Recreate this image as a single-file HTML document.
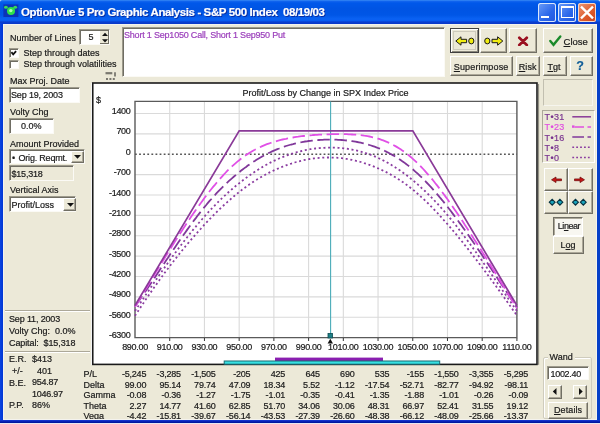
<!DOCTYPE html>
<html><head><meta charset="utf-8"><style>
html,body{margin:0;padding:0;width:600px;height:424px;overflow:hidden;background:#1648d0}
.a{position:absolute}
.t{position:absolute;font-family:"Liberation Sans",sans-serif;white-space:pre;line-height:1;-webkit-text-stroke:0.2px currentColor}
#win{position:absolute;left:0;top:0;width:600px;height:424px;overflow:hidden;background:#ece9d8;filter:blur(0.35px)}
</style></head><body><div id="win">
<div class="a" style="left:0;top:0;width:600px;height:24px;background:linear-gradient(to bottom,#3d8ff5 0,#1265ee 1.2px,#0058ea 3px,#0054e3 9px,#0056e6 15px,#0a62f3 19px,#0a5cf0 20.5px,#0a3fd0 22px,#0a38c8 24px)"></div>
<svg class="a" style="left:0;top:0" width="22" height="22"><rect x="3.4" y="4.4" width="15" height="12.6" fill="#0b33b8"/><circle cx="11" cy="11" r="4" fill="#2ee24a"/><circle cx="10.8" cy="10.6" r="1.7" fill="#b0ffb0"/><ellipse cx="5.9" cy="7.2" rx="1.9" ry="1.5" fill="#3ad858"/><ellipse cx="15.2" cy="7.2" rx="1.9" ry="1.5" fill="#3ad858"/><path d="M0,0 H2 A2,2 0 0 0 0,2Z" fill="#dfe6f5"/></svg><svg class="a" style="left:596px;top:0" width="4" height="4"><path d="M4,0 H1.5 A2.5,2.5 0 0 1 4,2.5Z" fill="#dfe6f5"/></svg>
<div class="t" style="left:21px;top:6.8px;font-size:11.5px;font-weight:bold;color:#fff;letter-spacing:-0.4px;text-shadow:1px 1px 0 #0a2ca0">OptionVue 5 Pro Graphic Analysis - S&amp;P 500 Index&nbsp; 08/19/03</div>
<div class="a" style="left:538px;top:3px;width:18px;height:18.5px;border-radius:2.5px;background:linear-gradient(135deg,#6d9ef8,#2a66ea 60%,#2257de);box-shadow:inset 0 0 0 1px #d9e6fb"></div>
<div class="a" style="left:541px;top:15.5px;width:7.5px;height:2.6px;background:#fff"></div>
<div class="a" style="left:558px;top:3px;width:18px;height:18.5px;border-radius:2.5px;background:linear-gradient(135deg,#6d9ef8,#2a66ea 60%,#2257de);box-shadow:inset 0 0 0 1px #d9e6fb"></div>
<div class="a" style="left:560.5px;top:6px;width:13.3px;height:12.4px;border:1.7px solid #fff;border-top-width:2.5px;box-sizing:border-box"></div>
<div class="a" style="left:578px;top:3px;width:18px;height:18.5px;border-radius:2.5px;background:linear-gradient(135deg,#ec9a7a,#dd5a2a 60%,#c8441c);box-shadow:inset 0 0 0 1px #f4d8cc"></div>
<svg class="a" style="left:578px;top:3px" width="18" height="19"><path d="M3,3.6 L15,15.4 M15,3.6 L3,15.4" stroke="#fff" stroke-width="2.3"/></svg>
<div class="t" style="left:10px;top:34.48px;font-size:9px;color:#1a1a1a;">Number of Lines</div>
<div class="a" style="left:79px;top:29px;width:31px;height:16px;background:#fff;border-top:1px solid #9d9a8c;border-left:1px solid #9d9a8c;border-right:1px solid #fbfaf5;border-bottom:1px solid #fbfaf5;box-shadow:inset 1px 1px 0 #6f6d63;box-sizing:border-box"></div>
<div class="a" style="left:99.5px;top:30.5px;width:9.5px;height:13.5px;background:#ece9d8;border-right:1px solid #716f64;border-bottom:1px solid #716f64;box-sizing:border-box"></div>
<svg class="a" style="left:100px;top:31px" width="10" height="14"><path d="M2,5 L5,1.8 L8,5Z" fill="#111"/><path d="M2,8.3 L5,11.5 L8,8.3Z" fill="#111"/></svg>
<div class="t" style="left:88.5px;top:33.48px;font-size:9px;color:#1a1a1a;">5</div>
<div class="a" style="left:9px;top:48px;width:10px;height:9.5px;background:#fff;border-top:1px solid #9d9a8c;border-left:1px solid #9d9a8c;border-right:1px solid #fbfaf5;border-bottom:1px solid #fbfaf5;box-shadow:inset 1px 1px 0 #6f6d63;box-sizing:border-box"></div>
<svg class="a" style="left:10px;top:49px" width="9" height="8"><path d="M1.4,3.2 L3.2,5.3 L6.1,2.1" stroke="#111" stroke-width="1.8" fill="none"/></svg>
<div class="t" style="left:23.5px;top:49.48px;font-size:9px;color:#1a1a1a;">Step through dates</div>
<div class="a" style="left:9px;top:59.5px;width:10px;height:9.5px;background:#fff;border-top:1px solid #9d9a8c;border-left:1px solid #9d9a8c;border-right:1px solid #fbfaf5;border-bottom:1px solid #fbfaf5;box-shadow:inset 1px 1px 0 #6f6d63;box-sizing:border-box"></div>
<div class="t" style="left:23.5px;top:60.48px;font-size:9px;color:#1a1a1a;">Step through volatilities</div>
<svg class="a" style="left:0;top:0" width="130" height="90"><path d="M105.5,73.2 H112.3" stroke="#7a7870" stroke-width="2.2"/><path d="M115,72.3 V76.6" stroke="#7a7870" stroke-width="1.8"/><path d="M106,79 H108 M109.4,79 H111.4 M112.8,79 H114.8" stroke="#7a7870" stroke-width="2"/></svg>
<div class="t" style="left:10px;top:77.28px;font-size:9px;color:#1a1a1a;">Max Proj. Date</div>
<div class="a" style="left:9px;top:87px;width:71px;height:16px;background:#fff;border-top:1px solid #9d9a8c;border-left:1px solid #9d9a8c;border-right:1px solid #fbfaf5;border-bottom:1px solid #fbfaf5;box-shadow:inset 1px 1px 0 #6f6d63;box-sizing:border-box"></div>
<div class="t" style="left:11px;top:90.78px;font-size:9px;color:#1a1a1a;letter-spacing:-0.15px">Sep 19, 2003</div>
<div class="t" style="left:10px;top:108.48px;font-size:9px;color:#1a1a1a;">Volty Chg</div>
<div class="a" style="left:9px;top:118px;width:45px;height:16px;background:#fff;border-top:1px solid #9d9a8c;border-left:1px solid #9d9a8c;border-right:1px solid #fbfaf5;border-bottom:1px solid #fbfaf5;box-shadow:inset 1px 1px 0 #6f6d63;box-sizing:border-box"></div>
<div class="t" style="left:21px;top:121.98px;font-size:9px;color:#1a1a1a;">0.0%</div>
<div class="t" style="left:10px;top:139.98px;font-size:9px;color:#1a1a1a;">Amount Provided</div>
<div class="a" style="left:9px;top:149px;width:76px;height:15px;background:#fff;border-top:1px solid #9d9a8c;border-left:1px solid #9d9a8c;border-right:1px solid #fbfaf5;border-bottom:1px solid #fbfaf5;box-shadow:inset 1px 1px 0 #6f6d63;box-sizing:border-box"></div>
<div class="t" style="left:12px;top:153.78px;font-size:9px;color:#1a1a1a;">•</div>
<div class="t" style="left:18.5px;top:153.78px;font-size:9px;color:#1a1a1a;letter-spacing:-0.2px">Orig. Reqmt.</div>
<div class="a" style="left:70.5px;top:150.5px;width:13.5px;height:12px;background:#ece9d8;border-top:1px solid #fff;border-left:1px solid #fff;border-right:1px solid #716f64;border-bottom:1px solid #716f64;box-shadow:inset -1px -1px 0 #aca899;box-sizing:border-box"></div>
<svg class="a" style="left:73px;top:154px" width="9" height="6"><path d="M1,1 H8 L4.5,4.8Z" fill="#111"/></svg>
<div class="a" style="left:9px;top:165px;width:65px;height:16px;background:#ece9d8;border-top:1px solid #9d9a8c;border-left:1px solid #9d9a8c;border-right:1px solid #fbfaf5;border-bottom:1px solid #fbfaf5;box-shadow:inset 1px 1px 0 #6f6d63;box-sizing:border-box"></div>
<div class="t" style="left:11.5px;top:169.98px;font-size:9px;color:#1a1a1a;letter-spacing:-0.2px">$15,318</div>
<div class="t" style="left:10px;top:186.48px;font-size:9px;color:#1a1a1a;">Vertical Axis</div>
<div class="a" style="left:9px;top:196px;width:67px;height:16px;background:#fff;border-top:1px solid #9d9a8c;border-left:1px solid #9d9a8c;border-right:1px solid #fbfaf5;border-bottom:1px solid #fbfaf5;box-shadow:inset 1px 1px 0 #6f6d63;box-sizing:border-box"></div>
<div class="t" style="left:11.5px;top:201.48px;font-size:9px;color:#1a1a1a;">Profit/Loss</div>
<div class="a" style="left:63px;top:197.5px;width:12.5px;height:13px;background:#ece9d8;border-top:1px solid #fff;border-left:1px solid #fff;border-right:1px solid #716f64;border-bottom:1px solid #716f64;box-shadow:inset -1px -1px 0 #aca899;box-sizing:border-box"></div>
<svg class="a" style="left:65.5px;top:202px" width="9" height="6"><path d="M1,1 H8 L4.5,4.8Z" fill="#111"/></svg>
<div class="a" style="left:5px;top:310px;width:85px;height:2px;border-top:1px solid #aca899;border-bottom:1px solid #fff;box-sizing:border-box"></div>
<div class="t" style="left:9px;top:314.98px;font-size:9px;color:#1a1a1a;letter-spacing:-0.15px">Sep 11, 2003</div>
<div class="t" style="left:9px;top:326.88px;font-size:9px;color:#1a1a1a;">Volty Chg:&nbsp; 0.0%</div>
<div class="t" style="left:9px;top:338.98px;font-size:9px;color:#1a1a1a;letter-spacing:-0.1px">Capital:&nbsp; $15,318</div>
<div class="a" style="left:5px;top:350.5px;width:85px;height:2px;border-top:1px solid #aca899;border-bottom:1px solid #fff;box-sizing:border-box"></div>
<div class="t" style="left:9px;top:355.28px;font-size:9px;color:#1a1a1a;">E.R.</div>
<div class="t" style="left:32px;top:355.28px;font-size:9px;color:#1a1a1a;">$413</div>
<div class="t" style="left:12px;top:367.28px;font-size:9px;color:#1a1a1a;">+/-</div>
<div class="t" style="left:37px;top:367.28px;font-size:9px;color:#1a1a1a;">401</div>
<div class="t" style="left:9px;top:378.58px;font-size:9px;color:#1a1a1a;">B.E.</div>
<div class="t" style="left:32px;top:378.38px;font-size:9px;color:#1a1a1a;letter-spacing:-0.25px">954.87</div>
<div class="t" style="left:32px;top:389.78px;font-size:9px;color:#1a1a1a;letter-spacing:-0.25px">1046.97</div>
<div class="t" style="left:9px;top:401.48px;font-size:9px;color:#1a1a1a;">P.P.</div>
<div class="t" style="left:32px;top:401.48px;font-size:9px;color:#1a1a1a;">86%</div>
<div class="a" style="left:121.5px;top:27px;width:323.5px;height:50px;background:#fff;border-top:1px solid #9d9a8c;border-left:1px solid #9d9a8c;border-right:1px solid #fbfaf5;border-bottom:1px solid #fbfaf5;box-shadow:inset 1px 1px 0 #6f6d63;box-sizing:border-box"></div>
<div class="t" style="left:124px;top:31.28px;font-size:9px;color:#9c40bc;letter-spacing:-0.2px">Short 1 Sep1050 Call, Short 1 Sep950 Put</div>
<div class="a" style="left:91px;top:82.5px;width:447px;height:282px;background:#fff"></div>
<svg class="a" style="left:0;top:0" width="600" height="424"><rect x="92.75" y="83.0" width="444.25" height="281.4" fill="none" stroke="#1a1a1a" stroke-width="1.6"/><path d="M538.6,84 V364.8" stroke="#8a887c" stroke-width="1"/></svg>
<div class="t" style="left:96px;top:96.28px;font-size:9px;color:#1a1a1a;">$</div>
<div class="t" style="left:242.5px;top:88.78px;font-size:9px;color:#1a1a1a;">Profit/Loss by Change in SPX Index Price</div>
<svg class="a" style="left:0;top:0" width="600" height="424"><path d="M169.72,101.4 V337.6 M204.44,101.4 V337.6 M239.16,101.4 V337.6 M273.88,101.4 V337.6 M308.6,101.4 V337.6 M343.32,101.4 V337.6 M378.04,101.4 V337.6 M412.76,101.4 V337.6 M447.48,101.4 V337.6 M482.2,101.4 V337.6 M135.0,113.5 H516.9 M135.0,133.87 H516.9 M135.0,174.61 H516.9 M135.0,194.98 H516.9 M135.0,215.35 H516.9 M135.0,235.72 H516.9 M135.0,256.09 H516.9 M135.0,276.46 H516.9 M135.0,296.83 H516.9 M135.0,317.2 H516.9" stroke="#dadada" stroke-width="1.1" fill="none"/><path d="M135.0,154.24 H516.9" stroke="#555" stroke-width="1.3" stroke-dasharray="1.8 2.3" fill="none"/><path d="M135,101.4 H516.9 V337.6 H135 Z" stroke="#5a5a5a" stroke-width="1.4" fill="none"/><path d="M169.72,338 V341 M204.44,338 V341 M239.16,338 V341 M273.88,338 V341 M308.6,338 V341 M343.32,338 V341 M378.04,338 V341 M412.76,338 V341 M447.48,338 V341 M482.2,338 V341 M516.92,338 V341" stroke="#333" stroke-width="1" fill="none"/><path d="M330.6,101.5 V338" stroke="#4aacb8" stroke-width="1.1" fill="none"/><rect x="328" y="333.5" width="4.5" height="4.5" fill="#1d7f86" stroke="#0c4b52" stroke-width="0.8"/><path d="M327.6,343.5 L330.3,338.8 L333,343.5Z" fill="#111"/><path d="M135.0,315.8 L136.7,313.1 L138.5,310.5 L140.2,307.9 L141.9,305.2 L143.7,302.7 L145.4,300.1 L147.2,297.5 L148.9,295.0 L150.6,292.5 L152.4,290.0 L154.1,287.5 L155.8,285.1 L157.6,282.7 L159.3,280.2 L161.0,277.9 L162.8,275.5 L164.5,273.1 L166.2,270.8 L168.0,268.5 L169.7,266.2 L171.5,263.9 L173.2,261.7 L174.9,259.5 L176.7,257.2 L178.4,255.1 L180.1,252.9 L181.9,250.7 L183.6,248.6 L185.3,246.5 L187.1,244.4 L188.8,242.4 L190.6,240.3 L192.3,238.3 L194.0,236.3 L195.8,234.3 L197.5,232.3 L199.2,230.4 L201.0,228.5 L202.7,226.6 L204.4,224.7 L206.2,222.8 L207.9,221.0 L209.6,219.2 L211.4,217.4 L213.1,215.6 L214.9,213.9 L216.6,212.1 L218.3,210.4 L220.1,208.7 L221.8,207.1 L223.5,205.5 L225.3,203.8 L227.0,202.3 L228.7,200.7 L230.5,199.2 L232.2,197.7 L234.0,196.2 L235.7,194.8 L237.4,193.4 L239.2,192.0 L240.9,190.6 L242.6,189.3 L244.4,188.0 L246.1,186.8 L247.8,185.5 L249.6,184.3 L251.3,183.2 L253.0,182.0 L254.8,180.9 L256.5,179.8 L258.3,178.8 L260.0,177.7 L261.7,176.7 L263.5,175.7 L265.2,174.8 L266.9,173.8 L268.7,172.9 L270.4,172.1 L272.1,171.2 L273.9,170.4 L275.6,169.6 L277.4,168.8 L279.1,168.1 L280.8,167.4 L282.6,166.7 L284.3,166.0 L286.0,165.3 L287.8,164.7 L289.5,164.1 L291.2,163.6 L293.0,163.0 L294.7,162.5 L296.4,162.0 L298.2,161.5 L299.9,161.1 L301.7,160.7 L303.4,160.3 L305.1,159.9 L306.9,159.6 L308.6,159.2 L310.3,159.0 L312.1,158.7 L313.8,158.4 L315.5,158.2 L317.3,158.1 L319.0,157.9 L320.8,157.8 L322.5,157.6 L324.2,157.6 L326.0,157.5 L327.7,157.5 L329.4,157.5 L331.2,157.5 L332.9,157.6 L334.6,157.6 L336.4,157.7 L338.1,157.9 L339.8,158.0 L341.6,158.2 L343.3,158.4 L345.1,158.7 L346.8,158.9 L348.5,159.2 L350.3,159.5 L352.0,159.9 L353.7,160.3 L355.5,160.7 L357.2,161.1 L358.9,161.5 L360.7,162.0 L362.4,162.5 L364.2,163.1 L365.9,163.6 L367.6,164.2 L369.4,164.8 L371.1,165.5 L372.8,166.1 L374.6,166.8 L376.3,167.6 L378.0,168.3 L379.8,169.1 L381.5,169.9 L383.2,170.7 L385.0,171.6 L386.7,172.4 L388.5,173.4 L390.2,174.3 L391.9,175.3 L393.7,176.3 L395.4,177.3 L397.1,178.4 L398.9,179.5 L400.6,180.6 L402.3,181.8 L404.1,183.0 L405.8,184.3 L407.6,185.5 L409.3,186.9 L411.0,188.2 L412.8,189.6 L414.5,191.0 L416.2,192.5 L418.0,194.0 L419.7,195.5 L421.4,197.1 L423.2,198.7 L424.9,200.3 L426.6,202.0 L428.4,203.7 L430.1,205.4 L431.9,207.2 L433.6,209.0 L435.3,210.8 L437.1,212.6 L438.8,214.5 L440.5,216.4 L442.3,218.3 L444.0,220.3 L445.7,222.2 L447.5,224.2 L449.2,226.2 L451.0,228.2 L452.7,230.3 L454.4,232.3 L456.2,234.4 L457.9,236.5 L459.6,238.6 L461.4,240.7 L463.1,242.9 L464.8,245.1 L466.6,247.2 L468.3,249.4 L470.0,251.6 L471.8,253.9 L473.5,256.1 L475.3,258.4 L477.0,260.6 L478.7,262.9 L480.5,265.2 L482.2,267.5 L483.9,269.8 L485.7,272.1 L487.4,274.5 L489.1,276.8 L490.9,279.2 L492.6,281.6 L494.4,283.9 L496.1,286.3 L497.8,288.7 L499.6,291.1 L501.3,293.5 L503.0,295.9 L504.8,298.4 L506.5,300.8 L508.2,303.2 L510.0,305.7 L511.7,308.1 L513.4,310.6 L515.2,313.0 L516.9,315.5" stroke="#8a3ca0" stroke-width="1.8" stroke-dasharray="2 2.7" fill="none"/><path d="M135.0,311.0 L136.7,308.4 L138.5,305.8 L140.2,303.2 L141.9,300.6 L143.7,298.0 L145.4,295.4 L147.2,292.8 L148.9,290.3 L150.6,287.7 L152.4,285.2 L154.1,282.6 L155.8,280.1 L157.6,277.6 L159.3,275.1 L161.0,272.6 L162.8,270.1 L164.5,267.7 L166.2,265.2 L168.0,262.8 L169.7,260.4 L171.5,258.0 L173.2,255.6 L174.9,253.3 L176.7,250.9 L178.4,248.6 L180.1,246.3 L181.9,244.0 L183.6,241.8 L185.3,239.5 L187.1,237.3 L188.8,235.1 L190.6,232.9 L192.3,230.8 L194.0,228.7 L195.8,226.6 L197.5,224.5 L199.2,222.5 L201.0,220.5 L202.7,218.5 L204.4,216.5 L206.2,214.6 L207.9,212.7 L209.6,210.8 L211.4,208.9 L213.1,207.1 L214.9,205.3 L216.6,203.6 L218.3,201.8 L220.1,200.1 L221.8,198.4 L223.5,196.8 L225.3,195.2 L227.0,193.6 L228.7,192.0 L230.5,190.5 L232.2,189.0 L234.0,187.5 L235.7,186.0 L237.4,184.6 L239.2,183.2 L240.9,181.8 L242.6,180.5 L244.4,179.2 L246.1,177.9 L247.8,176.6 L249.6,175.4 L251.3,174.1 L253.0,173.0 L254.8,171.8 L256.5,170.7 L258.3,169.6 L260.0,168.5 L261.7,167.4 L263.5,166.4 L265.2,165.4 L266.9,164.5 L268.7,163.5 L270.4,162.6 L272.1,161.8 L273.9,160.9 L275.6,160.1 L277.4,159.3 L279.1,158.5 L280.8,157.8 L282.6,157.1 L284.3,156.4 L286.0,155.7 L287.8,155.1 L289.5,154.5 L291.2,153.9 L293.0,153.4 L294.7,152.8 L296.4,152.3 L298.2,151.8 L299.9,151.4 L301.7,151.0 L303.4,150.6 L305.1,150.2 L306.9,149.9 L308.6,149.5 L310.3,149.2 L312.1,149.0 L313.8,148.7 L315.5,148.5 L317.3,148.3 L319.0,148.1 L320.8,148.0 L322.5,147.9 L324.2,147.8 L326.0,147.7 L327.7,147.6 L329.4,147.6 L331.2,147.6 L332.9,147.6 L334.6,147.7 L336.4,147.7 L338.1,147.8 L339.8,148.0 L341.6,148.1 L343.3,148.3 L345.1,148.5 L346.8,148.7 L348.5,149.0 L350.3,149.3 L352.0,149.6 L353.7,149.9 L355.5,150.3 L357.2,150.7 L358.9,151.1 L360.7,151.6 L362.4,152.1 L364.2,152.6 L365.9,153.2 L367.6,153.7 L369.4,154.4 L371.1,155.0 L372.8,155.7 L374.6,156.4 L376.3,157.1 L378.0,157.9 L379.8,158.7 L381.5,159.5 L383.2,160.4 L385.0,161.3 L386.7,162.3 L388.5,163.2 L390.2,164.2 L391.9,165.3 L393.7,166.3 L395.4,167.4 L397.1,168.6 L398.9,169.7 L400.6,170.9 L402.3,172.2 L404.1,173.4 L405.8,174.7 L407.6,176.0 L409.3,177.4 L411.0,178.8 L412.8,180.2 L414.5,181.6 L416.2,183.1 L418.0,184.6 L419.7,186.2 L421.4,187.8 L423.2,189.4 L424.9,191.0 L426.6,192.7 L428.4,194.4 L430.1,196.1 L431.9,197.9 L433.6,199.6 L435.3,201.5 L437.1,203.3 L438.8,205.2 L440.5,207.1 L442.3,209.1 L444.0,211.0 L445.7,213.1 L447.5,215.1 L449.2,217.2 L451.0,219.3 L452.7,221.4 L454.4,223.6 L456.2,225.7 L457.9,228.0 L459.6,230.2 L461.4,232.4 L463.1,234.7 L464.8,237.0 L466.6,239.3 L468.3,241.7 L470.0,244.0 L471.8,246.4 L473.5,248.8 L475.3,251.2 L477.0,253.7 L478.7,256.1 L480.5,258.5 L482.2,261.0 L483.9,263.5 L485.7,266.0 L487.4,268.4 L489.1,270.9 L490.9,273.4 L492.6,275.9 L494.4,278.4 L496.1,281.0 L497.8,283.5 L499.6,286.0 L501.3,288.5 L503.0,291.0 L504.8,293.5 L506.5,296.0 L508.2,298.6 L510.0,301.1 L511.7,303.6 L513.4,306.0 L515.2,308.5 L516.9,311.0" stroke="#8a3ca0" stroke-width="1.8" stroke-dasharray="2 2.7" fill="none"/><path d="M135.0,306.4 L136.7,303.9 L138.5,301.5 L140.2,299.0 L141.9,296.5 L143.7,293.9 L145.4,291.4 L147.2,288.8 L148.9,286.3 L150.6,283.7 L152.4,281.1 L154.1,278.5 L155.8,275.9 L157.6,273.3 L159.3,270.7 L161.0,268.1 L162.8,265.5 L164.5,262.9 L166.2,260.3 L168.0,257.7 L169.7,255.1 L171.5,252.5 L173.2,249.9 L174.9,247.4 L176.7,244.8 L178.4,242.3 L180.1,239.8 L181.9,237.3 L183.6,234.8 L185.3,232.4 L187.1,229.9 L188.8,227.5 L190.6,225.1 L192.3,222.8 L194.0,220.4 L195.8,218.1 L197.5,215.8 L199.2,213.6 L201.0,211.4 L202.7,209.2 L204.4,207.1 L206.2,205.0 L207.9,202.9 L209.6,200.9 L211.4,199.0 L213.1,197.0 L214.9,195.1 L216.6,193.2 L218.3,191.4 L220.1,189.6 L221.8,187.9 L223.5,186.1 L225.3,184.5 L227.0,182.8 L228.7,181.2 L230.5,179.6 L232.2,178.1 L234.0,176.5 L235.7,175.1 L237.4,173.6 L239.2,172.2 L240.9,170.8 L242.6,169.5 L244.4,168.1 L246.1,166.9 L247.8,165.6 L249.6,164.4 L251.3,163.2 L253.0,162.0 L254.8,160.9 L256.5,159.8 L258.3,158.7 L260.0,157.7 L261.7,156.7 L263.5,155.7 L265.2,154.8 L266.9,153.9 L268.7,153.0 L270.4,152.2 L272.1,151.4 L273.9,150.6 L275.6,149.9 L277.4,149.1 L279.1,148.5 L280.8,147.8 L282.6,147.2 L284.3,146.6 L286.0,146.0 L287.8,145.5 L289.5,145.0 L291.2,144.5 L293.0,144.1 L294.7,143.6 L296.4,143.2 L298.2,142.8 L299.9,142.5 L301.7,142.2 L303.4,141.8 L305.1,141.5 L306.9,141.3 L308.6,141.0 L310.3,140.8 L312.1,140.6 L313.8,140.4 L315.5,140.2 L317.3,140.1 L319.0,140.0 L320.8,139.9 L322.5,139.8 L324.2,139.7 L326.0,139.7 L327.7,139.6 L329.4,139.6 L331.2,139.6 L332.9,139.6 L334.6,139.7 L336.4,139.7 L338.1,139.8 L339.8,139.9 L341.6,140.0 L343.3,140.1 L345.1,140.3 L346.8,140.5 L348.5,140.7 L350.3,140.9 L352.0,141.1 L353.7,141.4 L355.5,141.7 L357.2,142.0 L358.9,142.3 L360.7,142.7 L362.4,143.1 L364.2,143.5 L365.9,144.0 L367.6,144.5 L369.4,145.0 L371.1,145.5 L372.8,146.1 L374.6,146.7 L376.3,147.3 L378.0,148.0 L379.8,148.7 L381.5,149.4 L383.2,150.2 L385.0,151.0 L386.7,151.9 L388.5,152.7 L390.2,153.7 L391.9,154.6 L393.7,155.6 L395.4,156.7 L397.1,157.7 L398.9,158.8 L400.6,160.0 L402.3,161.2 L404.1,162.4 L405.8,163.7 L407.6,165.1 L409.3,166.4 L411.0,167.8 L412.8,169.3 L414.5,170.8 L416.2,172.3 L418.0,173.9 L419.7,175.6 L421.4,177.2 L423.2,179.0 L424.9,180.7 L426.6,182.5 L428.4,184.3 L430.1,186.2 L431.9,188.1 L433.6,190.1 L435.3,192.0 L437.1,194.1 L438.8,196.1 L440.5,198.2 L442.3,200.3 L444.0,202.4 L445.7,204.6 L447.5,206.8 L449.2,209.0 L451.0,211.3 L452.7,213.6 L454.4,215.9 L456.2,218.2 L457.9,220.5 L459.6,222.9 L461.4,225.3 L463.1,227.7 L464.8,230.1 L466.6,232.6 L468.3,235.1 L470.0,237.5 L471.8,240.0 L473.5,242.6 L475.3,245.1 L477.0,247.6 L478.7,250.2 L480.5,252.7 L482.2,255.3 L483.9,257.9 L485.7,260.5 L487.4,263.1 L489.1,265.7 L490.9,268.3 L492.6,270.9 L494.4,273.5 L496.1,276.1 L497.8,278.7 L499.6,281.4 L501.3,284.0 L503.0,286.6 L504.8,289.2 L506.5,291.8 L508.2,294.5 L510.0,297.1 L511.7,299.7 L513.4,302.3 L515.2,304.9 L516.9,307.5" stroke="#80389a" stroke-width="1.8" stroke-dasharray="12.5 4.6" fill="none"/><path d="M135.0,306.9 L136.7,304.0 L138.5,301.1 L140.2,298.2 L141.9,295.3 L143.7,292.4 L145.4,289.5 L147.2,286.7 L148.9,283.8 L150.6,280.9 L152.4,278.1 L154.1,275.2 L155.8,272.4 L157.6,269.5 L159.3,266.7 L161.0,263.8 L162.8,261.0 L164.5,258.2 L166.2,255.4 L168.0,252.6 L169.7,249.8 L171.5,247.1 L173.2,244.3 L174.9,241.6 L176.7,238.8 L178.4,236.1 L180.1,233.4 L181.9,230.7 L183.6,228.1 L185.3,225.4 L187.1,222.8 L188.8,220.2 L190.6,217.6 L192.3,215.1 L194.0,212.6 L195.8,210.1 L197.5,207.6 L199.2,205.2 L201.0,202.8 L202.7,200.4 L204.4,198.0 L206.2,195.7 L207.9,193.5 L209.6,191.2 L211.4,189.0 L213.1,186.9 L214.9,184.8 L216.6,182.7 L218.3,180.7 L220.1,178.7 L221.8,176.8 L223.5,174.9 L225.3,173.0 L227.0,171.2 L228.7,169.5 L230.5,167.8 L232.2,166.2 L234.0,164.6 L235.7,163.1 L237.4,161.6 L239.2,160.2 L240.9,158.8 L242.6,157.5 L244.4,156.3 L246.1,155.1 L247.8,153.9 L249.6,152.8 L251.3,151.8 L253.0,150.7 L254.8,149.8 L256.5,148.9 L258.3,148.0 L260.0,147.2 L261.7,146.4 L263.5,145.6 L265.2,144.9 L266.9,144.2 L268.7,143.6 L270.4,143.0 L272.1,142.4 L273.9,141.9 L275.6,141.4 L277.4,140.9 L279.1,140.4 L280.8,139.9 L282.6,139.5 L284.3,139.1 L286.0,138.8 L287.8,138.4 L289.5,138.1 L291.2,137.8 L293.0,137.5 L294.7,137.2 L296.4,136.9 L298.2,136.7 L299.9,136.4 L301.7,136.2 L303.4,136.0 L305.1,135.8 L306.9,135.6 L308.6,135.5 L310.3,135.3 L312.1,135.2 L313.8,135.0 L315.5,134.9 L317.3,134.8 L319.0,134.7 L320.8,134.6 L322.5,134.5 L324.2,134.4 L326.0,134.4 L327.7,134.3 L329.4,134.3 L331.2,134.2 L332.9,134.2 L334.6,134.2 L336.4,134.1 L338.1,134.1 L339.8,134.1 L341.6,134.1 L343.3,134.2 L345.1,134.2 L346.8,134.2 L348.5,134.3 L350.3,134.4 L352.0,134.5 L353.7,134.6 L355.5,134.7 L357.2,134.8 L358.9,135.0 L360.7,135.2 L362.4,135.4 L364.2,135.7 L365.9,135.9 L367.6,136.2 L369.4,136.5 L371.1,136.9 L372.8,137.3 L374.6,137.7 L376.3,138.2 L378.0,138.7 L379.8,139.2 L381.5,139.8 L383.2,140.4 L385.0,141.1 L386.7,141.8 L388.5,142.6 L390.2,143.4 L391.9,144.3 L393.7,145.2 L395.4,146.1 L397.1,147.1 L398.9,148.2 L400.6,149.3 L402.3,150.5 L404.1,151.7 L405.8,153.0 L407.6,154.4 L409.3,155.8 L411.0,157.2 L412.8,158.8 L414.5,160.3 L416.2,161.9 L418.0,163.6 L419.7,165.3 L421.4,167.1 L423.2,169.0 L424.9,170.9 L426.6,172.8 L428.4,174.8 L430.1,176.8 L431.9,178.9 L433.6,181.0 L435.3,183.2 L437.1,185.4 L438.8,187.6 L440.5,189.9 L442.3,192.2 L444.0,194.6 L445.7,196.9 L447.5,199.3 L449.2,201.8 L451.0,204.2 L452.7,206.7 L454.4,209.3 L456.2,211.8 L457.9,214.3 L459.6,216.9 L461.4,219.5 L463.1,222.1 L464.8,224.8 L466.6,227.4 L468.3,230.1 L470.0,232.8 L471.8,235.5 L473.5,238.2 L475.3,240.9 L477.0,243.6 L478.7,246.4 L480.5,249.1 L482.2,251.9 L483.9,254.6 L485.7,257.4 L487.4,260.2 L489.1,263.0 L490.9,265.8 L492.6,268.6 L494.4,271.4 L496.1,274.2 L497.8,277.0 L499.6,279.8 L501.3,282.7 L503.0,285.5 L504.8,288.3 L506.5,291.2 L508.2,294.0 L510.0,296.9 L511.7,299.7 L513.4,302.6 L515.2,305.5 L516.9,308.3" stroke="#e050e6" stroke-width="1.8" stroke-dasharray="12.5 4.6" fill="none"/><path d="M135.0,305.5 L239.2,130.9 L412.8,130.9 L516.9,305.5" stroke="#8a3a98" stroke-width="1.7" fill="none"/><rect x="275" y="357.6" width="108" height="3.4" fill="#8a1fb0"/><rect x="224.2" y="361" width="215.5" height="3.2" fill="#36e0e2" stroke="#1a6a72" stroke-width="1"/></svg>
<div class="t" style="right:469.5px;top:107.08px;font-size:9px;color:#1a1a1a;text-align:right;letter-spacing:-0.3px">1400</div>
<div class="t" style="right:469.5px;top:127.45px;font-size:9px;color:#1a1a1a;text-align:right;letter-spacing:-0.3px">700</div>
<div class="t" style="right:469.5px;top:147.82px;font-size:9px;color:#1a1a1a;text-align:right;letter-spacing:-0.3px">0</div>
<div class="t" style="right:469.5px;top:168.19px;font-size:9px;color:#1a1a1a;text-align:right;letter-spacing:-0.3px">-700</div>
<div class="t" style="right:469.5px;top:188.56px;font-size:9px;color:#1a1a1a;text-align:right;letter-spacing:-0.3px">-1400</div>
<div class="t" style="right:469.5px;top:208.93px;font-size:9px;color:#1a1a1a;text-align:right;letter-spacing:-0.3px">-2100</div>
<div class="t" style="right:469.5px;top:229.30px;font-size:9px;color:#1a1a1a;text-align:right;letter-spacing:-0.3px">-2800</div>
<div class="t" style="right:469.5px;top:249.67px;font-size:9px;color:#1a1a1a;text-align:right;letter-spacing:-0.3px">-3500</div>
<div class="t" style="right:469.5px;top:270.04px;font-size:9px;color:#1a1a1a;text-align:right;letter-spacing:-0.3px">-4200</div>
<div class="t" style="right:469.5px;top:290.41px;font-size:9px;color:#1a1a1a;text-align:right;letter-spacing:-0.3px">-4900</div>
<div class="t" style="right:469.5px;top:310.78px;font-size:9px;color:#1a1a1a;text-align:right;letter-spacing:-0.3px">-5600</div>
<div class="t" style="right:469.5px;top:331.15px;font-size:9px;color:#1a1a1a;text-align:right;letter-spacing:-0.3px">-6300</div>
<div class="t" style="left:115.00px;width:40px;text-align:center;top:343.39px;font-size:9px;color:#1a1a1a;letter-spacing:-0.3px">890.00</div>
<div class="t" style="left:149.72px;width:40px;text-align:center;top:343.39px;font-size:9px;color:#1a1a1a;letter-spacing:-0.3px">910.00</div>
<div class="t" style="left:184.44px;width:40px;text-align:center;top:343.39px;font-size:9px;color:#1a1a1a;letter-spacing:-0.3px">930.00</div>
<div class="t" style="left:219.16px;width:40px;text-align:center;top:343.39px;font-size:9px;color:#1a1a1a;letter-spacing:-0.3px">950.00</div>
<div class="t" style="left:253.88px;width:40px;text-align:center;top:343.39px;font-size:9px;color:#1a1a1a;letter-spacing:-0.3px">970.00</div>
<div class="t" style="left:288.60px;width:40px;text-align:center;top:343.39px;font-size:9px;color:#1a1a1a;letter-spacing:-0.3px">990.00</div>
<div class="t" style="left:323.32px;width:40px;text-align:center;top:343.39px;font-size:9px;color:#1a1a1a;letter-spacing:-0.3px">1010.00</div>
<div class="t" style="left:358.04px;width:40px;text-align:center;top:343.39px;font-size:9px;color:#1a1a1a;letter-spacing:-0.3px">1030.00</div>
<div class="t" style="left:392.76px;width:40px;text-align:center;top:343.39px;font-size:9px;color:#1a1a1a;letter-spacing:-0.3px">1050.00</div>
<div class="t" style="left:427.48px;width:40px;text-align:center;top:343.39px;font-size:9px;color:#1a1a1a;letter-spacing:-0.3px">1070.00</div>
<div class="t" style="left:462.20px;width:40px;text-align:center;top:343.39px;font-size:9px;color:#1a1a1a;letter-spacing:-0.3px">1090.00</div>
<div class="t" style="left:496.92px;width:40px;text-align:center;top:343.39px;font-size:9px;color:#1a1a1a;letter-spacing:-0.3px">1110.00</div>
<div class="t" style="left:83.5px;top:370.18px;font-size:9px;color:#1a1a1a;">P/L</div>
<div class="t" style="right:453.8px;top:370.18px;font-size:9px;color:#1a1a1a;text-align:right;letter-spacing:-0.2px">-5,245</div>
<div class="t" style="right:419.08000000000004px;top:370.18px;font-size:9px;color:#1a1a1a;text-align:right;letter-spacing:-0.2px">-3,285</div>
<div class="t" style="right:384.36px;top:370.18px;font-size:9px;color:#1a1a1a;text-align:right;letter-spacing:-0.2px">-1,505</div>
<div class="t" style="right:349.64px;top:370.18px;font-size:9px;color:#1a1a1a;text-align:right;letter-spacing:-0.2px">-205</div>
<div class="t" style="right:314.92px;top:370.18px;font-size:9px;color:#1a1a1a;text-align:right;letter-spacing:-0.2px">425</div>
<div class="t" style="right:280.2px;top:370.18px;font-size:9px;color:#1a1a1a;text-align:right;letter-spacing:-0.2px">645</div>
<div class="t" style="right:245.48000000000002px;top:370.18px;font-size:9px;color:#1a1a1a;text-align:right;letter-spacing:-0.2px">690</div>
<div class="t" style="right:210.76000000000005px;top:370.18px;font-size:9px;color:#1a1a1a;text-align:right;letter-spacing:-0.2px">535</div>
<div class="t" style="right:176.04000000000002px;top:370.18px;font-size:9px;color:#1a1a1a;text-align:right;letter-spacing:-0.2px">-155</div>
<div class="t" style="right:141.32px;top:370.18px;font-size:9px;color:#1a1a1a;text-align:right;letter-spacing:-0.2px">-1,550</div>
<div class="t" style="right:106.60000000000002px;top:370.18px;font-size:9px;color:#1a1a1a;text-align:right;letter-spacing:-0.2px">-3,355</div>
<div class="t" style="right:71.88px;top:370.18px;font-size:9px;color:#1a1a1a;text-align:right;letter-spacing:-0.2px">-5,295</div>
<div class="t" style="left:83.5px;top:380.68px;font-size:9px;color:#1a1a1a;">Delta</div>
<div class="t" style="right:453.8px;top:380.68px;font-size:9px;color:#1a1a1a;text-align:right;letter-spacing:-0.2px">99.00</div>
<div class="t" style="right:419.08000000000004px;top:380.68px;font-size:9px;color:#1a1a1a;text-align:right;letter-spacing:-0.2px">95.14</div>
<div class="t" style="right:384.36px;top:380.68px;font-size:9px;color:#1a1a1a;text-align:right;letter-spacing:-0.2px">79.74</div>
<div class="t" style="right:349.64px;top:380.68px;font-size:9px;color:#1a1a1a;text-align:right;letter-spacing:-0.2px">47.09</div>
<div class="t" style="right:314.92px;top:380.68px;font-size:9px;color:#1a1a1a;text-align:right;letter-spacing:-0.2px">18.34</div>
<div class="t" style="right:280.2px;top:380.68px;font-size:9px;color:#1a1a1a;text-align:right;letter-spacing:-0.2px">5.52</div>
<div class="t" style="right:245.48000000000002px;top:380.68px;font-size:9px;color:#1a1a1a;text-align:right;letter-spacing:-0.2px">-1.12</div>
<div class="t" style="right:210.76000000000005px;top:380.68px;font-size:9px;color:#1a1a1a;text-align:right;letter-spacing:-0.2px">-17.54</div>
<div class="t" style="right:176.04000000000002px;top:380.68px;font-size:9px;color:#1a1a1a;text-align:right;letter-spacing:-0.2px">-52.71</div>
<div class="t" style="right:141.32px;top:380.68px;font-size:9px;color:#1a1a1a;text-align:right;letter-spacing:-0.2px">-82.77</div>
<div class="t" style="right:106.60000000000002px;top:380.68px;font-size:9px;color:#1a1a1a;text-align:right;letter-spacing:-0.2px">-94.92</div>
<div class="t" style="right:71.88px;top:380.68px;font-size:9px;color:#1a1a1a;text-align:right;letter-spacing:-0.2px">-98.11</div>
<div class="t" style="left:83.5px;top:391.28px;font-size:9px;color:#1a1a1a;">Gamma</div>
<div class="t" style="right:453.8px;top:391.28px;font-size:9px;color:#1a1a1a;text-align:right;letter-spacing:-0.2px">-0.08</div>
<div class="t" style="right:419.08000000000004px;top:391.28px;font-size:9px;color:#1a1a1a;text-align:right;letter-spacing:-0.2px">-0.36</div>
<div class="t" style="right:384.36px;top:391.28px;font-size:9px;color:#1a1a1a;text-align:right;letter-spacing:-0.2px">-1.27</div>
<div class="t" style="right:349.64px;top:391.28px;font-size:9px;color:#1a1a1a;text-align:right;letter-spacing:-0.2px">-1.75</div>
<div class="t" style="right:314.92px;top:391.28px;font-size:9px;color:#1a1a1a;text-align:right;letter-spacing:-0.2px">-1.01</div>
<div class="t" style="right:280.2px;top:391.28px;font-size:9px;color:#1a1a1a;text-align:right;letter-spacing:-0.2px">-0.35</div>
<div class="t" style="right:245.48000000000002px;top:391.28px;font-size:9px;color:#1a1a1a;text-align:right;letter-spacing:-0.2px">-0.41</div>
<div class="t" style="right:210.76000000000005px;top:391.28px;font-size:9px;color:#1a1a1a;text-align:right;letter-spacing:-0.2px">-1.35</div>
<div class="t" style="right:176.04000000000002px;top:391.28px;font-size:9px;color:#1a1a1a;text-align:right;letter-spacing:-0.2px">-1.88</div>
<div class="t" style="right:141.32px;top:391.28px;font-size:9px;color:#1a1a1a;text-align:right;letter-spacing:-0.2px">-1.01</div>
<div class="t" style="right:106.60000000000002px;top:391.28px;font-size:9px;color:#1a1a1a;text-align:right;letter-spacing:-0.2px">-0.26</div>
<div class="t" style="right:71.88px;top:391.28px;font-size:9px;color:#1a1a1a;text-align:right;letter-spacing:-0.2px">-0.09</div>
<div class="t" style="left:83.5px;top:401.88px;font-size:9px;color:#1a1a1a;">Theta</div>
<div class="t" style="right:453.8px;top:401.88px;font-size:9px;color:#1a1a1a;text-align:right;letter-spacing:-0.2px">2.27</div>
<div class="t" style="right:419.08000000000004px;top:401.88px;font-size:9px;color:#1a1a1a;text-align:right;letter-spacing:-0.2px">14.77</div>
<div class="t" style="right:384.36px;top:401.88px;font-size:9px;color:#1a1a1a;text-align:right;letter-spacing:-0.2px">41.60</div>
<div class="t" style="right:349.64px;top:401.88px;font-size:9px;color:#1a1a1a;text-align:right;letter-spacing:-0.2px">62.85</div>
<div class="t" style="right:314.92px;top:401.88px;font-size:9px;color:#1a1a1a;text-align:right;letter-spacing:-0.2px">51.70</div>
<div class="t" style="right:280.2px;top:401.88px;font-size:9px;color:#1a1a1a;text-align:right;letter-spacing:-0.2px">34.06</div>
<div class="t" style="right:245.48000000000002px;top:401.88px;font-size:9px;color:#1a1a1a;text-align:right;letter-spacing:-0.2px">30.06</div>
<div class="t" style="right:210.76000000000005px;top:401.88px;font-size:9px;color:#1a1a1a;text-align:right;letter-spacing:-0.2px">48.31</div>
<div class="t" style="right:176.04000000000002px;top:401.88px;font-size:9px;color:#1a1a1a;text-align:right;letter-spacing:-0.2px">66.97</div>
<div class="t" style="right:141.32px;top:401.88px;font-size:9px;color:#1a1a1a;text-align:right;letter-spacing:-0.2px">52.41</div>
<div class="t" style="right:106.60000000000002px;top:401.88px;font-size:9px;color:#1a1a1a;text-align:right;letter-spacing:-0.2px">31.55</div>
<div class="t" style="right:71.88px;top:401.88px;font-size:9px;color:#1a1a1a;text-align:right;letter-spacing:-0.2px">19.12</div>
<div class="t" style="left:83.5px;top:412.48px;font-size:9px;color:#1a1a1a;">Vega</div>
<div class="t" style="right:453.8px;top:412.48px;font-size:9px;color:#1a1a1a;text-align:right;letter-spacing:-0.2px">-4.42</div>
<div class="t" style="right:419.08000000000004px;top:412.48px;font-size:9px;color:#1a1a1a;text-align:right;letter-spacing:-0.2px">-15.81</div>
<div class="t" style="right:384.36px;top:412.48px;font-size:9px;color:#1a1a1a;text-align:right;letter-spacing:-0.2px">-39.67</div>
<div class="t" style="right:349.64px;top:412.48px;font-size:9px;color:#1a1a1a;text-align:right;letter-spacing:-0.2px">-56.14</div>
<div class="t" style="right:314.92px;top:412.48px;font-size:9px;color:#1a1a1a;text-align:right;letter-spacing:-0.2px">-43.53</div>
<div class="t" style="right:280.2px;top:412.48px;font-size:9px;color:#1a1a1a;text-align:right;letter-spacing:-0.2px">-27.39</div>
<div class="t" style="right:245.48000000000002px;top:412.48px;font-size:9px;color:#1a1a1a;text-align:right;letter-spacing:-0.2px">-26.60</div>
<div class="t" style="right:210.76000000000005px;top:412.48px;font-size:9px;color:#1a1a1a;text-align:right;letter-spacing:-0.2px">-48.38</div>
<div class="t" style="right:176.04000000000002px;top:412.48px;font-size:9px;color:#1a1a1a;text-align:right;letter-spacing:-0.2px">-66.12</div>
<div class="t" style="right:141.32px;top:412.48px;font-size:9px;color:#1a1a1a;text-align:right;letter-spacing:-0.2px">-48.09</div>
<div class="t" style="right:106.60000000000002px;top:412.48px;font-size:9px;color:#1a1a1a;text-align:right;letter-spacing:-0.2px">-25.66</div>
<div class="t" style="right:71.88px;top:412.48px;font-size:9px;color:#1a1a1a;text-align:right;letter-spacing:-0.2px">-13.37</div>
<div class="a" style="left:450px;top:28px;width:28.5px;height:25px;background:#ece9d8;border:1px solid #404040;box-shadow:inset 1px 1px 0 #fff,inset -1px -1px 0 #8a887c;box-sizing:border-box"></div>
<div class="a" style="left:453px;top:31px;width:22.5px;height:19px;border:1px solid #cdcabb;box-sizing:border-box"></div>
<div class="a" style="left:480px;top:28px;width:27px;height:25px;background:#ece9d8;border-top:1px solid #fff;border-left:1px solid #fff;border-right:1px solid #716f64;border-bottom:1px solid #716f64;box-shadow:inset -1px -1px 0 #aca899;box-sizing:border-box"></div>
<svg class="a" style="left:0;top:0" width="600" height="424"><path d="M455.8,41 L461,36.8 V39.3 H466.6 V42.7 H461 V45.2Z" fill="#f0ec10" stroke="#1a1a1a" stroke-width="1" stroke-linejoin="round"/><ellipse cx="471.3" cy="41" rx="2.6" ry="2.9" fill="#f0ec10" stroke="#1a1a1a" stroke-width="1"/><path d="M502.8,41 L497.6,36.8 V39.3 H492 V42.7 H497.6 V45.2Z" fill="#f0ec10" stroke="#1a1a1a" stroke-width="1" stroke-linejoin="round"/><ellipse cx="487.3" cy="41" rx="2.6" ry="2.9" fill="#f0ec10" stroke="#1a1a1a" stroke-width="1"/></svg>
<div class="a" style="left:509px;top:28px;width:28px;height:25px;background:#ece9d8;border-top:1px solid #fff;border-left:1px solid #fff;border-right:1px solid #716f64;border-bottom:1px solid #716f64;box-shadow:inset -1px -1px 0 #aca899;box-sizing:border-box"></div>
<svg class="a" style="left:517px;top:36px" width="12" height="10"><path d="M2.3,1.8 L9.8,9 M9.8,1.8 L2.3,9" stroke="#9a1020" stroke-width="2.7" stroke-linecap="round"/></svg>
<div class="a" style="left:542.5px;top:28px;width:50.5px;height:25px;background:#ece9d8;border-top:1px solid #fff;border-left:1px solid #fff;border-right:1px solid #716f64;border-bottom:1px solid #716f64;box-shadow:inset -1px -1px 0 #aca899;box-sizing:border-box"></div>
<svg class="a" style="left:548px;top:34px" width="14" height="13"><path d="M2.3,7 L5.5,10.8 L12.3,2.5" stroke="#1a8a2a" stroke-width="2.4" fill="none" stroke-linecap="round"/></svg>
<div class="t" style="left:563.5px;top:36.59px;font-size:9.5px;color:#1a1a1a;"><u>C</u>lose</div>
<div class="a" style="left:450px;top:56px;width:62.5px;height:20px;background:#ece9d8;border-top:1px solid #fff;border-left:1px solid #fff;border-right:1px solid #716f64;border-bottom:1px solid #716f64;box-shadow:inset -1px -1px 0 #aca899;box-sizing:border-box"></div>
<div class="t" style="left:453.8px;top:62.98px;font-size:9px;color:#1a1a1a;letter-spacing:0.15px"><u>S</u>uperimpose</div>
<div class="a" style="left:515.5px;top:56px;width:24px;height:20px;background:#ece9d8;border-top:1px solid #fff;border-left:1px solid #fff;border-right:1px solid #716f64;border-bottom:1px solid #716f64;box-shadow:inset -1px -1px 0 #aca899;box-sizing:border-box"></div>
<div class="t" style="left:518.7px;top:62.98px;font-size:9px;color:#1a1a1a;letter-spacing:0.1px"><u>R</u>isk</div>
<div class="a" style="left:543px;top:56px;width:24px;height:20px;background:#ece9d8;border-top:1px solid #fff;border-left:1px solid #fff;border-right:1px solid #716f64;border-bottom:1px solid #716f64;box-shadow:inset -1px -1px 0 #aca899;box-sizing:border-box"></div>
<div class="t" style="left:547.5px;top:62.98px;font-size:9px;color:#1a1a1a;"><u>T</u>gt</div>
<div class="a" style="left:569.5px;top:56px;width:23px;height:20px;background:#ece9d8;border-top:1px solid #fff;border-left:1px solid #fff;border-right:1px solid #716f64;border-bottom:1px solid #716f64;box-shadow:inset -1px -1px 0 #aca899;box-sizing:border-box"></div>
<div class="t" style="left:576.3px;top:59.5px;font-size:12.5px;font-weight:bold;color:#0d5c98">?</div>
<div class="a" style="left:543px;top:78.5px;width:50px;height:27px;background:#ece9d8;border-top:1px solid #c2bfb0;border-left:1px solid #c2bfb0;border-right:1px solid #f6f5ee;border-bottom:1px solid #f6f5ee;box-sizing:border-box"></div>
<div class="a" style="left:541.5px;top:109.5px;width:53px;height:53.5px;background:#ece9d8;border-top:1px solid #aca899;border-left:1px solid #aca899;border-right:1px solid #fff;border-bottom:1px solid #fff;box-sizing:border-box"></div>
<div class="t" style="left:544.5px;top:113.28px;font-size:9px;color:#7a3590;letter-spacing:0.4px">T•31</div>
<div class="t" style="left:544.5px;top:123.48px;font-size:9px;color:#e050e0;letter-spacing:0.4px">T•23</div>
<div class="t" style="left:544.5px;top:133.68px;font-size:9px;color:#7a3590;letter-spacing:0.4px">T•16</div>
<div class="t" style="left:544.5px;top:143.88px;font-size:9px;color:#7a3590;letter-spacing:0.4px">T•8</div>
<div class="t" style="left:544.5px;top:154.08px;font-size:9px;color:#7a3590;letter-spacing:0.4px">T•0</div>
<svg class="a" style="left:0;top:0" width="600" height="424"><path d="M572.3,116.8 H591" stroke="#8a3a98" stroke-width="1.5"/><path d="M572,126.6 H574.5" stroke="#e050e0" stroke-width="2.4"/><path d="M574.5,127 H584 M587.5,127 H591" stroke="#e050e0" stroke-width="1.4"/><path d="M572.3,137 H584 M587.5,137 H591" stroke="#80389a" stroke-width="1.5"/><path d="M572.3,147.2 H591" stroke="#8a3ca0" stroke-width="1.5" stroke-dasharray="1.8 2.1"/><path d="M572.3,157.4 H591" stroke="#8a3ca0" stroke-width="1.5" stroke-dasharray="1.8 2.1"/></svg>
<div class="a" style="left:544px;top:167.5px;width:24px;height:23px;background:#ece9d8;border-top:1px solid #fff;border-left:1px solid #fff;border-right:1px solid #716f64;border-bottom:1px solid #716f64;box-shadow:inset -1px -1px 0 #aca899;box-sizing:border-box"></div>
<div class="a" style="left:568px;top:167.5px;width:24.5px;height:23px;background:#ece9d8;border-top:1px solid #fff;border-left:1px solid #fff;border-right:1px solid #716f64;border-bottom:1px solid #716f64;box-shadow:inset -1px -1px 0 #aca899;box-sizing:border-box"></div>
<div class="a" style="left:544px;top:190.5px;width:24px;height:23px;background:#ece9d8;border-top:1px solid #fff;border-left:1px solid #fff;border-right:1px solid #716f64;border-bottom:1px solid #716f64;box-shadow:inset -1px -1px 0 #aca899;box-sizing:border-box"></div>
<div class="a" style="left:568px;top:190.5px;width:24.5px;height:23px;background:#ece9d8;border-top:1px solid #fff;border-left:1px solid #fff;border-right:1px solid #716f64;border-bottom:1px solid #716f64;box-shadow:inset -1px -1px 0 #aca899;box-sizing:border-box"></div>
<svg class="a" style="left:0;top:0" width="600" height="424"><path d="M551.5,179.8 L556,177 V178.9 H561.5 V180.7 H556 V182.6Z" fill="#c41414" stroke="#6a0a0a" stroke-width="0.7" stroke-linejoin="round"/><path d="M584.5,179.8 L580,177 V178.9 H574.5 V180.7 H580 V182.6Z" fill="#c41414" stroke="#6a0a0a" stroke-width="0.7" stroke-linejoin="round"/><path d="M549.3000000000001,202.2 L552.2,199.3 L555.1,202.2 L552.2,205.1Z" fill="#18a4bc" stroke="#073240" stroke-width="1.1"/><path d="M557.0,202.2 L559.9,199.3 L562.8,202.2 L559.9,205.1Z" fill="#18a4bc" stroke="#073240" stroke-width="1.1"/><path d="M572.6,202.2 L575.5,199.3 L578.4,202.2 L575.5,205.1Z" fill="#18a4bc" stroke="#073240" stroke-width="1.1"/><path d="M580.4,202.2 L583.3,199.3 L586.1999999999999,202.2 L583.3,205.1Z" fill="#18a4bc" stroke="#073240" stroke-width="1.1"/></svg>
<div class="a" style="left:553px;top:216.5px;width:30px;height:19px;background:#f8f7f1;border-top:1px solid #716f64;border-left:1px solid #716f64;border-right:1px solid #fff;border-bottom:1px solid #fff;box-shadow:inset 1px 1px 0 #aca899;box-sizing:border-box"></div>
<div class="t" style="left:557.8px;top:222.48px;font-size:9px;color:#1a1a1a;letter-spacing:-0.45px">Li<u>n</u>ear</div>
<div class="a" style="left:553px;top:235.5px;width:31px;height:18px;background:#ece9d8;border-top:1px solid #fff;border-left:1px solid #fff;border-right:1px solid #716f64;border-bottom:1px solid #716f64;box-shadow:inset -1px -1px 0 #aca899;box-sizing:border-box"></div>
<div class="t" style="left:560.5px;top:240.98px;font-size:9px;color:#1a1a1a;">L<u>o</u>g</div>
<div class="a" style="left:542.5px;top:357px;width:49.5px;height:61.5px;border:1px solid #cfccbd;box-shadow:1px 1px 0 #fff inset;box-sizing:border-box;border-radius:2px"></div>
<div class="a" style="left:548px;top:353px;width:27px;height:9px;background:#ece9d8"></div>
<div class="t" style="left:549.5px;top:353.48px;font-size:9px;color:#1a1a1a;">Wand</div>
<div class="a" style="left:546.5px;top:365.5px;width:42px;height:14.5px;background:#fff;border-top:1px solid #9d9a8c;border-left:1px solid #9d9a8c;border-right:1px solid #fbfaf5;border-bottom:1px solid #fbfaf5;box-shadow:inset 1px 1px 0 #6f6d63;box-sizing:border-box"></div>
<div class="t" style="left:550.5px;top:369.78px;font-size:9px;color:#1a1a1a;letter-spacing:-0.3px">1002.40</div>
<div class="a" style="left:548px;top:384.5px;width:13.5px;height:14px;background:#ece9d8;border-top:1px solid #fff;border-left:1px solid #fff;border-right:1px solid #716f64;border-bottom:1px solid #716f64;box-shadow:inset -1px -1px 0 #aca899;box-sizing:border-box"></div>
<svg class="a" style="left:551px;top:387px" width="8" height="9"><path d="M5.5,1 V8 L1.8,4.5Z" fill="#111"/></svg>
<div class="a" style="left:573px;top:384.5px;width:14px;height:14px;background:#ece9d8;border-top:1px solid #fff;border-left:1px solid #fff;border-right:1px solid #716f64;border-bottom:1px solid #716f64;box-shadow:inset -1px -1px 0 #aca899;box-sizing:border-box"></div>
<svg class="a" style="left:577px;top:387px" width="8" height="9"><path d="M2,1 V8 L5.7,4.5Z" fill="#111"/></svg>
<div class="a" style="left:548px;top:401.5px;width:39.5px;height:17px;background:#ece9d8;border-top:1px solid #fff;border-left:1px solid #fff;border-right:1px solid #716f64;border-bottom:1px solid #716f64;box-shadow:inset -1px -1px 0 #aca899;box-sizing:border-box"></div>
<div class="t" style="left:554px;top:406.48px;font-size:9px;color:#1a1a1a;letter-spacing:0.1px"><u>D</u>etails</div>
<div class="a" style="left:0;top:23px;width:3px;height:401px;background:linear-gradient(to right,#0a44e0,#0036d4)"></div>
<div class="a" style="left:597px;top:23px;width:3px;height:401px;background:#0640c8"></div>
<div class="a" style="left:0;top:419.5px;width:600px;height:4.5px;background:linear-gradient(to bottom,#1a40d8 0,#0a28c0 1px,#0018a0 2.5px,#6070c0 3px,#e6e8f0 3.5px)"></div>
<div class="a" style="left:3px;top:24px;width:594px;height:396px;border-top:1px solid #f4f3ee;border-left:1px solid #f4f3ee;border-right:1px solid #f4f3ee;border-bottom:1px solid #f4f3ee;box-sizing:border-box"></div>
</div></body></html>
